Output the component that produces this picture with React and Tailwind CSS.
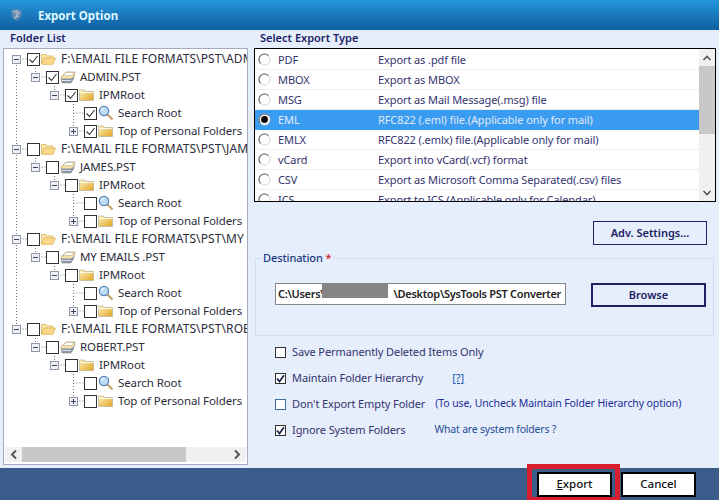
const font = "font-['Noto_Sans','Liberation_Sans',sans-serif]";

const indents = ['pl-[8px]', 'pl-[27px]', 'pl-[46px]', 'pl-[65px]'];

function makeTree(path, pst, checked) {
  return [
    { level: 0, label: path, icon: 'open', expander: 'minus', checked },
    { level: 1, label: pst, icon: 'pst', expander: 'minus', checked },
    { level: 2, label: 'IPMRoot', icon: 'folder', expander: 'minus', checked },
    { level: 3, label: 'Search Root', icon: 'search', checked },
    { level: 3, label: 'Top of Personal Folders', icon: 'folder', expander: 'plus', checked },
  ];
}

const treeRows = [
  ...makeTree('F:\\EMAIL FILE FORMATS\\PST\\ADMIN', 'ADMIN.PST', true),
  ...makeTree('F:\\EMAIL FILE FORMATS\\PST\\JAMES', 'JAMES.PST', false),
  ...makeTree('F:\\EMAIL FILE FORMATS\\PST\\MY EMAILS', 'MY EMAILS .PST', false),
  ...makeTree('F:\\EMAIL FILE FORMATS\\PST\\ROBERT', 'ROBERT.PST', false),
];

const exportTypes = [
  ['PDF', 'Export as .pdf file'],
  ['MBOX', 'Export as MBOX'],
  ['MSG', 'Export as Mail Message(.msg) file'],
  ['EML', 'RFC822 (.eml) file.(Applicable only for mail)'],
  ['EMLX', 'RFC822 (.emlx) file.(Applicable only for mail)'],
  ['vCard', 'Export into vCard(.vcf) format'],
  ['CSV', 'Export as Microsoft Comma Separated(.csv) files'],
  ['ICS', 'Export to ICS (Applicable only for Calendar)'],
];

function Expander({ type }) {
  return (
    <svg width="9" height="9" viewBox="0 0 9 9" className="shrink-0">
      <rect x="0.5" y="0.5" width="8" height="8" fill="#eef0f4" stroke="#8f98a8" />
      <path d={type === 'plus' ? 'M2 4.5h5M4.5 2v5' : 'M2 4.5h5'} stroke="#3a4560" />
    </svg>
  );
}

function TreeCheck({ checked }) {
  return (
    <span className="flex h-[13px] w-[13px] shrink-0 items-center justify-center border border-[#333] bg-white">
      {checked && (
        <svg width="11" height="11" viewBox="0 0 11 11">
          <path d="M1.5 5.5l3 3 5-6.5" fill="none" stroke="#333" strokeWidth="1.1" />
        </svg>
      )}
    </span>
  );
}

function FolderIcon({ kind }) {
  if (kind === 'search') {
    return (
      <svg width="16" height="16" viewBox="0 0 16 16" className="shrink-0">
        <line x1="9" y1="9" x2="14.5" y2="14.5" stroke="#c9a26a" strokeWidth="2.2" />
        <circle cx="6" cy="6" r="4.6" fill="#bcdcf5" stroke="#5c84b8" strokeWidth="1.3" />
        <path d="M3.5 6a2.5 2.5 0 0 1 2.5-2.5" stroke="#fff" fill="none" />
      </svg>
    );
  }
  if (kind === 'pst') {
    return (
      <svg width="16" height="14" viewBox="0 0 16 14" className="shrink-0">
        <path d="M1 7l5-5h9l-1 5-3 6H2z" fill="#f5e2a8" stroke="#a89a72" strokeWidth="0.7" />
        <path d="M3 5.5l3-3h8l-2 3z" fill="#fff" stroke="#b0a680" strokeWidth="0.5" />
        <path d="M1 8.5h10l3-2v2l-3 4.5H2z" fill="#8a94a4" />
        <path d="M2 10.5h9" stroke="#dde2e8" />
      </svg>
    );
  }
  if (kind === 'open') {
    return (
      <svg width="15" height="12" viewBox="0 0 15 12" className="shrink-0">
        <path d="M0.5 11V1.5h4.5l1 1.5h6v2" fill="#fbe8ae" stroke="#dcb050" strokeWidth="0.8" />
        <path d="M0.7 11.3L3.2 5h11.3l-2.7 6.3z" fill="#fbd88a" stroke="#dcae50" strokeWidth="0.8" />
      </svg>
    );
  }
  return (
    <svg width="15" height="12" viewBox="0 0 15 12" className="shrink-0">
      <defs>
        <linearGradient id="fold" x1="0" y1="0" x2="1" y2="1">
          <stop offset="0" stopColor="#fdf3c0" />
          <stop offset="1" stopColor="#e0a420" />
        </linearGradient>
      </defs>
      <path d="M0.5 11.5V1h5l1 1.5h8v9z" fill="url(#fold)" stroke="#b8b09a" strokeWidth="0.7" />
      <path d="M0.5 3.5h14" stroke="#fff" strokeWidth="0.8" />
    </svg>
  );
}

function TreeRow({ row }) {
  return (
    <div className={`flex h-[18px] items-center whitespace-nowrap ${indents[row.level]}`}>
      {row.expander ? <Expander type={row.expander} /> : <span className="w-[9px] shrink-0" />}
      <span className="ml-[6px]">
        <TreeCheck checked={row.checked} />
      </span>
      <span className="ml-px flex w-[16px] shrink-0 items-center">
        <FolderIcon kind={row.icon} />
      </span>
      <span
        className={`ml-[4px] text-[#2c2c3a] ${
          row.level === 0 ? 'text-[12px] tracking-[0.1px]' : 'text-[11.5px] tracking-[-0.1px]'
        }`}
      >
        {row.label}
      </span>
    </div>
  );
}

// dotted guide lines behind the tree rows, one group per root
function TreeLines() {
  const groups = [0, 1, 2, 3];
  return (
    <svg className="absolute top-px left-0 h-[400px] w-[120px]" viewBox="0 0 120 400">
      {groups.map((g) => {
        const y = 9 + g * 90;
        return (
          <g key={g} stroke="#777" strokeDasharray="1 2" fill="none">
            <path d={`M12.5 ${y}h14`} />
            {g < 3 && <path d={`M12.5 ${y}v90`} />}
            <path d={`M31.5 ${y + 6}v12h14`} />
            <path d={`M50.5 ${y + 24}v12h14`} />
            <path d={`M69.5 ${y + 42}v36M69.5 ${y + 54}h14M69.5 ${y + 72}h14`} />
          </g>
        );
      })}
    </svg>
  );
}

function Radio({ on }) {
  return (
    <svg width="13" height="13" viewBox="0 0 13 13" className="shrink-0">
      <circle cx="6.5" cy="6.5" r="5.5" fill="#fff" stroke="#d5d5d5" />
      <path d="M2.6 10.4A5.5 5.5 0 0 1 10.4 2.6" fill="none" stroke="#666" strokeWidth="1.1" />
      {on && <circle cx="6.5" cy="6.5" r="3.4" fill="#000" />}
    </svg>
  );
}

function OptionCheck({ checked, blue }) {
  return (
    <span
      className={`flex h-[11px] w-[11px] shrink-0 items-center justify-center border bg-white ${
        blue ? 'border-[#3a6ea5]' : 'border-[#333]'
      }`}
    >
      {checked && (
        <svg width="9" height="9" viewBox="0 0 9 9">
          <path d="M1 4.5l2.5 3L8 1.2" fill="none" stroke="#1c2a50" strokeWidth="1.8" />
        </svg>
      )}
    </span>
  );
}

function Option({ label, checked, blue, children }) {
  return (
    <div className="flex h-[26px] items-center">
      <OptionCheck checked={checked} blue={blue} />
      <span className="ml-[6px] text-[11px] tracking-[-0.1px] whitespace-nowrap text-[#34346e]">{label}</span>
      {children}
    </div>
  );
}

export default function App() {
  return (
    <div className={`flex h-[500px] w-[719px] flex-col overflow-hidden bg-[#e6edfb] ${font}`}>
      <div className="flex h-[30px] shrink-0 items-center bg-gradient-to-b from-[#2496dc] to-[#0f5f9f]">
        <svg width="16" height="14" viewBox="0 0 16 14" className="ml-[8px]">
          <path d="M3 2l5-1.5L14 3l-1 6-5 4-4-4z" fill="#5f88ae" />
          <path d="M5 4l4-1 2 2-3 1 2 2-4 2" fill="none" stroke="#a9bdd0" strokeWidth="1.4" />
        </svg>
        <span className="ml-[14px] pt-[2px] text-[11.5px] font-bold text-[#dff6ff]">Export Option</span>
      </div>

      <div className="flex min-h-0 flex-1">
        <div className="w-[254px] shrink-0 pl-[3px]">
          <div className="flex h-[18px] items-center pb-[2px] pl-[7px] text-[11px] font-semibold text-[#1c1f66]">Folder List</div>
          <div className="flex h-[417px] w-[245px] flex-col border border-[#a3adbd] bg-white">
            <div className="relative min-h-0 flex-1 overflow-hidden">
              <TreeLines />
              <div className="relative pt-px">
                {treeRows.map((row, i) => (
                  <TreeRow key={i} row={row} />
                ))}
              </div>
            </div>
            <div className="mx-px mb-[2px] flex h-[15px] shrink-0 items-center bg-[#f0f0f0]">
              <svg width="17" height="15" viewBox="0 0 17 15" className="shrink-0">
                <path d="M11 3.5L7 7.5l4 4" fill="none" stroke="#555" strokeWidth="2" />
              </svg>
              <div className="h-full w-[164px] bg-[#c8c8c8]" />
              <svg width="17" height="15" viewBox="0 0 17 15" className="ml-auto shrink-0">
                <path d="M6 3.5l4 4-4 4" fill="none" stroke="#555" strokeWidth="2" />
              </svg>
            </div>
          </div>
        </div>

        <div className="min-w-0 flex-1">
          <div className="flex h-[18px] items-center pb-[2px] pl-[6px] text-[11px] font-semibold text-[#1c1f66]">Select Export Type</div>
          <div className="flex h-[154px] w-[462px] border border-black bg-white">
            <div className="min-w-0 flex-1 overflow-hidden pt-px">
              {exportTypes.map(([name, desc]) => {
                const on = name === 'EML';
                return (
                  <div
                    key={name}
                    className={`flex h-[20px] shrink-0 items-center border-b pl-[3px] text-[11px] tracking-[-0.1px] whitespace-nowrap ${
                      on ? 'border-[#3a9cf0] bg-[#3a9cf0] text-[#e3e9fa]' : 'border-[#eeeeee] text-[#34346e]'
                    }`}
                  >
                    <Radio on={on} />
                    <span className="ml-[7px] w-[100px] shrink-0 pt-[2px]">{name}</span>
                    <span className="pt-[2px]">{desc}</span>
                  </div>
                );
              })}
            </div>
            <div className="flex w-[16px] shrink-0 flex-col bg-[#f0f0f0]">
              <div className="flex h-[17px] shrink-0 items-center justify-center">
                <svg width="10" height="8" viewBox="0 0 10 8">
                  <path d="M1.5 6L5 2.5 8.5 6" fill="none" stroke="#555" strokeWidth="1.6" />
                </svg>
              </div>
              <div className="h-[68px] bg-[#c8c8c8]" />
              <div className="mt-auto flex h-[17px] shrink-0 items-center justify-center">
                <svg width="10" height="8" viewBox="0 0 10 8">
                  <path d="M1.5 2L5 5.5 8.5 2" fill="none" stroke="#555" strokeWidth="1.6" />
                </svg>
              </div>
            </div>
          </div>

          <div className="mt-[19px] flex justify-end pr-[12px]">
            <button className="h-[24px] w-[114px] border border-[#1c2364] text-[11px] font-semibold text-[#1c2364]">
              Adv. Settings...
            </button>
          </div>

          <fieldset className="mt-[6px] ml-px h-[85px] w-[459px] border border-[#d3dcec] p-0">
            <legend className="ml-[5px] px-[2px] text-[11px] leading-[14px] font-medium tracking-[-0.1px] text-[#1c3a80]">
              Destination <span className="text-[#d0202a]">*</span>
            </legend>
            <div className="mt-[18px] flex items-start pl-[19px]">
              <div className="relative h-[22px] w-[291px] overflow-hidden border border-[#858585] bg-white pl-[2px] text-[11px] leading-[20px] font-semibold tracking-[-0.3px] whitespace-nowrap text-[#222]">
                C:\Users\<span className="inline-block w-[69px]" />\Desktop\SysTools PST Converter
                <div className="absolute top-0 left-[46px] h-[14px] w-[66px] bg-[#858585]" />
              </div>
              <button className="ml-[25px] h-[24px] w-[115px] border-2 border-[#1c2364] pt-px text-[11px] font-semibold text-[#1c2364]">
                Browse
              </button>
            </div>
          </fieldset>

          <div className="mt-[3px] pl-[21px]">
            <Option label="Save Permanently Deleted Items Only" />
            <Option label="Maintain Folder Hierarchy" checked>
              <a className="ml-[29px] text-[11px] text-[#1a55b0] underline">[?]</a>
            </Option>
            <Option label="Don't Export Empty Folder" blue>
              <span className="ml-[10px] text-[10.5px] tracking-[-0.1px] whitespace-nowrap text-[#1c2f9c]">
                (To use, Uncheck Maintain Folder Hierarchy option)
              </span>
            </Option>
            <Option label="Ignore System Folders" checked>
              <span className="ml-[29px] text-[10.5px] tracking-[-0.2px] whitespace-nowrap text-[#1f4d98]">What are system folders ?</span>
            </Option>
          </div>
        </div>
      </div>

      <div className="flex h-[32px] shrink-0 items-center justify-end bg-[#3a5c8b] pr-[23px]">
        <div className="relative">
          <button className="block h-[25px] w-[75px] border-2 border-black bg-white text-[11.5px] font-medium text-[#111]">
            <span className="underline">E</span>xport
          </button>
          <div className="absolute -top-[8px] -right-[8px] -bottom-[5px] -left-[10px] border-[5px] border-[#d81e2c]" />
        </div>
        <button className="ml-[9px] h-[25px] w-[75px] border-2 border-black bg-white text-[11.5px] font-medium text-[#111]">
          Cancel
        </button>
      </div>
    </div>
  );
}
